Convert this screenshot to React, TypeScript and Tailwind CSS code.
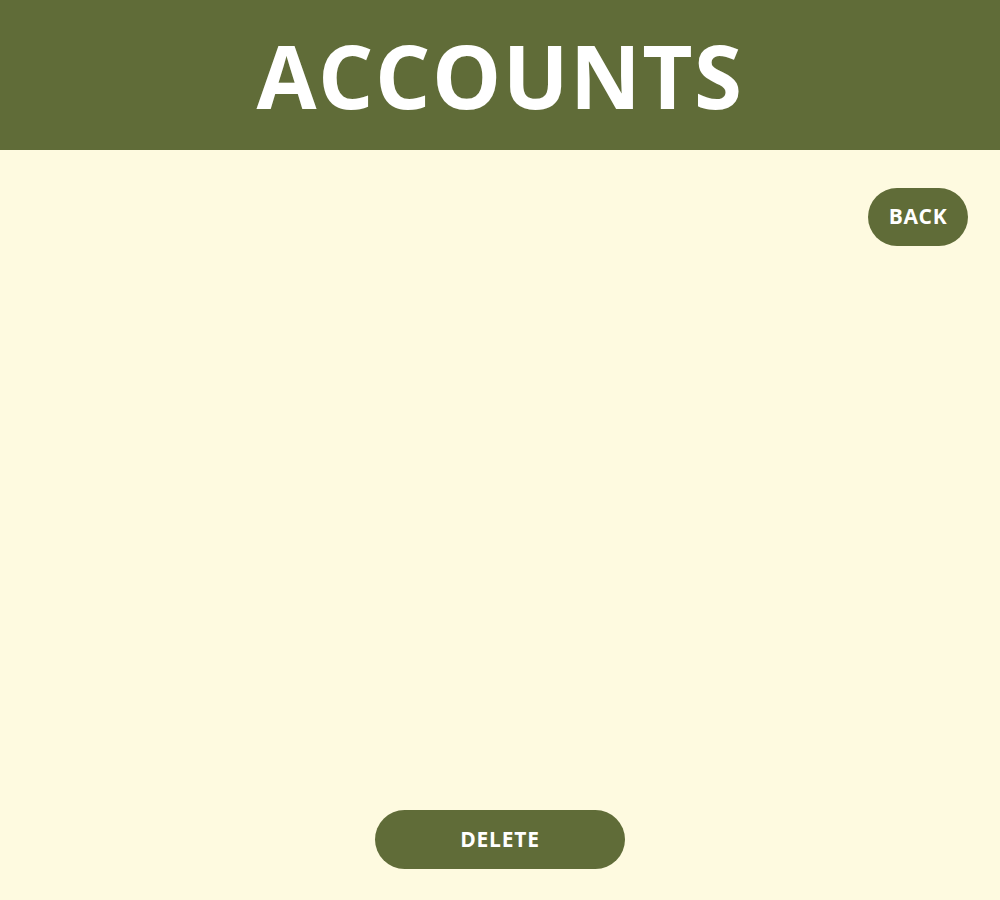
export default function App() {
  return (
    <div
      className="h-screen flex flex-col bg-[#fefae0]"
      style={{ fontFamily: '"Open Sans", "Noto Sans", sans-serif' }}
    >
      <header className="h-[150px] bg-[#606c38] flex items-center justify-center">
        <h1 className="text-[87px] font-bold text-white leading-none tracking-[1.5px]">
          ACCOUNTS
        </h1>
      </header>
      <main className="flex-1 flex flex-col px-8 pt-[38px] pb-[31px]">
        <div className="flex justify-end">
          <button className="w-[100px] h-[58px] rounded-full bg-[#606c38] text-white text-[21px] font-bold tracking-[0.7px]">
            BACK
          </button>
        </div>
        <div className="flex-1" />
        <div className="flex justify-center">
          <button className="w-[250px] h-[59px] rounded-full bg-[#606c38] text-white text-[21px] font-bold tracking-[0.8px]">
            DELETE
          </button>
        </div>
      </main>
    </div>
  );
}
